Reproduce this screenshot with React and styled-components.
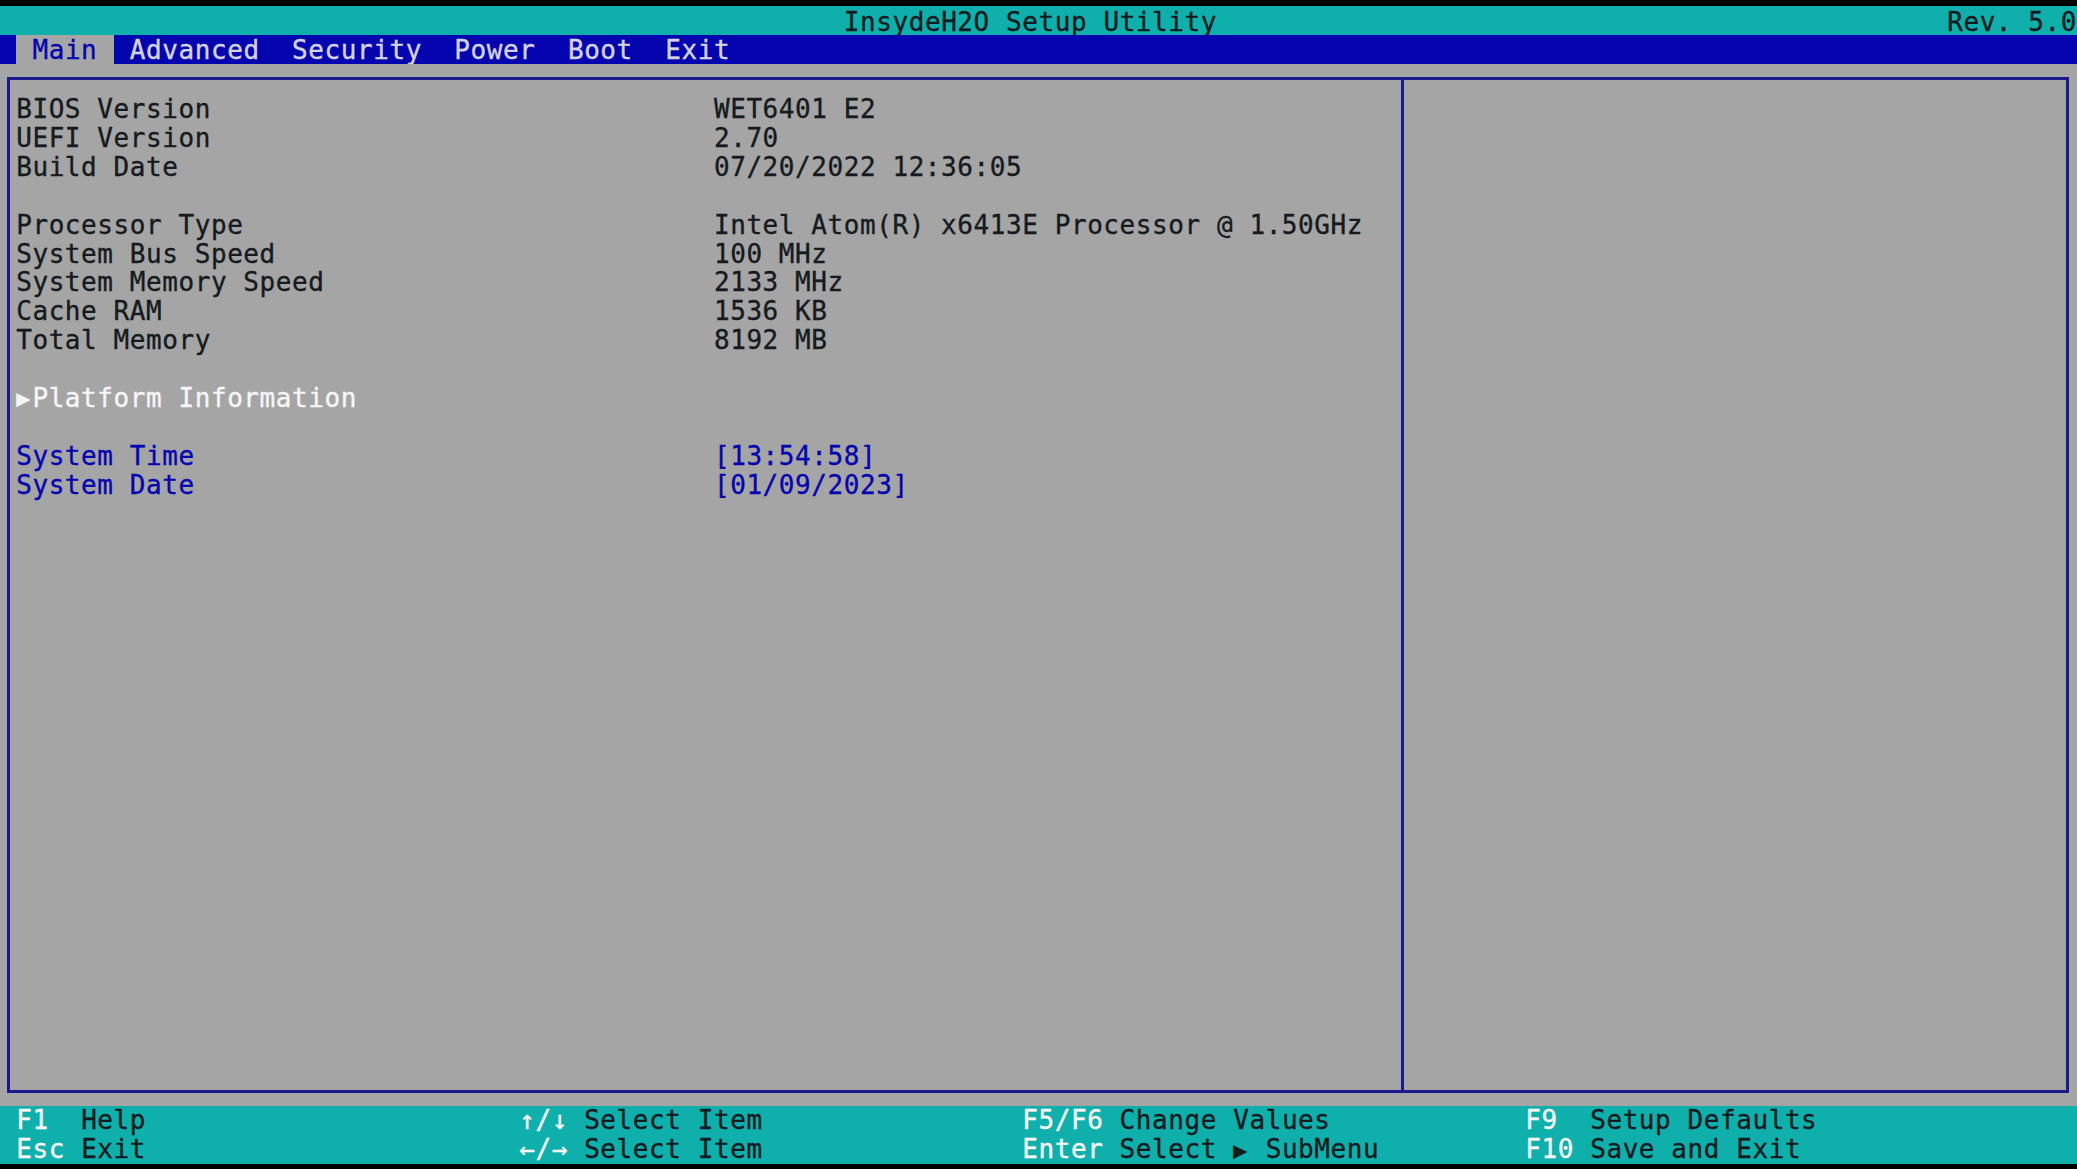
import React from "react";
import styled, { createGlobalStyle } from "styled-components";

// the setup screen is a 128 x 40 text grid
const CW = 2077 / 128;
const RH = 28.95;
const FONT = 26;
const SPACING = CW - 0.60205 * FONT;

const CYAN = "#0fb0ab";
const BLUE = "#0505b0";
const GRAY = "#a5a5a5";
const LINE = "#1a1a8e";
const INK = "#141a1e";
const LIGHT = "#d4d4e0";
const WHITE = "#f6f6f6";

const GlobalStyle = createGlobalStyle`
  html, body {
    margin: 0;
    padding: 0;
    background: #000;
    overflow: hidden;
  }
`;

const Screen = styled.div`
  width: 2077px;
  height: 1169px;
  box-sizing: border-box;
  padding-top: 6px;
  background: #000;
  display: flex;
  flex-direction: column;
  font-family: "DejaVu Sans Mono", "Liberation Mono", monospace;
  font-size: ${FONT}px;
  letter-spacing: ${SPACING}px;
  line-height: ${RH}px;
  white-space: pre;
  -webkit-text-stroke: 0.35px currentColor;
`;

const TitleBar = styled.div`
  height: ${RH}px;
  box-sizing: border-box;
  padding: 1.5px 0 0 ${52 * CW}px;
  background: ${CYAN};
  color: ${INK};
  display: flex;
  justify-content: space-between;
`;

const MenuBar = styled.div`
  height: ${RH}px;
  background: ${BLUE};
  display: flex;
  padding-left: ${CW}px;
`;

const Tab = styled.div`
  height: ${RH}px;
  box-sizing: border-box;
  padding: 1.5px ${CW}px 0;
  color: ${(p) => (p.$active ? BLUE : LIGHT)};
  background: ${(p) => (p.$active ? GRAY : "transparent")};
`;

const Body = styled.div`
  height: ${36 * RH}px;
  box-sizing: border-box;
  background: ${GRAY};
  padding: 13px 8px 13px 6.6px;
  display: flex;
`;

const Frame = styled.div`
  flex: 1;
  display: grid;
  grid-template-columns: 1391px 1fr;
  border: 3px solid ${LINE};
`;

const LeftPanel = styled.div`
  padding: ${RH / 2 + 0.5}px 0 0 6.6px;
  display: flex;
  flex-direction: column;
`;

const RightPanel = styled.div`
  border-left: 3px solid ${LINE};
`;

const Row = styled.div`
  height: ${RH}px;
  display: flex;
  color: ${(p) => p.$color || INK};
`;

const Label = styled.span`
  width: ${43 * CW}px;
`;

const Pointer = styled.span`
  display: inline-block;
  width: ${CW}px;
  font-size: 23px;
  letter-spacing: 0;
`;

const Gap = styled.div`
  height: ${RH}px;
`;

const Footer = styled.div`
  height: ${2 * RH}px;
  background: ${CYAN};
  display: grid;
  grid-template-columns: repeat(4, ${31 * CW}px);
  padding-left: ${CW}px;
`;

const KeyGroup = styled.div`
  display: grid;
  grid-template-columns: ${(p) => p.$keyCols * CW}px auto;
  grid-auto-rows: ${RH}px;
`;

const Key = styled.span`
  color: ${WHITE};
`;

const Desc = styled.span`
  color: ${INK};
`;

const info = [
  ["BIOS Version", "WET6401 E2"],
  ["UEFI Version", "2.70"],
  ["Build Date", "07/20/2022 12:36:05"],
  null,
  ["Processor Type", "Intel Atom(R) x6413E Processor @ 1.50GHz"],
  ["System Bus Speed", "100 MHz"],
  ["System Memory Speed", "2133 MHz"],
  ["Cache RAM", "1536 KB"],
  ["Total Memory", "8192 MB"],
];

const tabs = ["Main", "Advanced", "Security", "Power", "Boot", "Exit"];

const keys = [
  { cols: 4, items: [["F1", "Help"], ["Esc", "Exit"]] },
  { cols: 4, items: [["↑/↓", "Select Item"], ["←/→", "Select Item"]] },
  {
    cols: 6,
    items: [
      ["F5/F6", "Change Values"],
      ["Enter", <>Select <Pointer>▶</Pointer> SubMenu</>],
    ],
  },
  { cols: 4, items: [["F9", "Setup Defaults"], ["F10", "Save and Exit"]] },
];

export default function App() {
  return (
    <>
      <GlobalStyle />
      <Screen>
        <TitleBar>
          <span>InsydeH2O Setup Utility</span>
          <span>Rev. 5.0</span>
        </TitleBar>
        <MenuBar>
          {tabs.map((t, i) => (
            <Tab key={t} $active={i === 0}>
              {t}
            </Tab>
          ))}
        </MenuBar>
        <Body>
          <Frame>
            <LeftPanel>
              {info.map((item, i) =>
                item ? (
                  <Row key={i}>
                    <Label>{item[0]}</Label>
                    <span>{item[1]}</span>
                  </Row>
                ) : (
                  <Gap key={i} />
                )
              )}
              <Gap />
              <Row $color={WHITE}>
                <Pointer>▶</Pointer>Platform Information
              </Row>
              <Gap />
              <Row $color={BLUE}>
                <Label>System Time</Label>
                <span>[13:54:58]</span>
              </Row>
              <Row $color={BLUE}>
                <Label>System Date</Label>
                <span>[01/09/2023]</span>
              </Row>
            </LeftPanel>
            <RightPanel />
          </Frame>
        </Body>
        <Footer>
          {keys.map((g, i) => (
            <KeyGroup key={i} $keyCols={g.cols}>
              {g.items.map(([k, d]) => (
                <React.Fragment key={k}>
                  <Key>{k}</Key>
                  <Desc>{d}</Desc>
                </React.Fragment>
              ))}
            </KeyGroup>
          ))}
        </Footer>
      </Screen>
    </>
  );
}
